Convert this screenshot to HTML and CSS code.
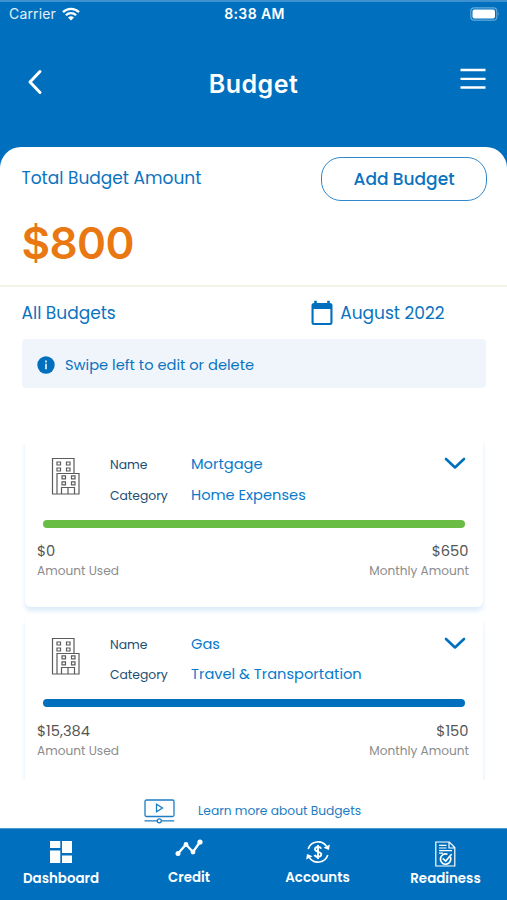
FILE: index.html
```html
<!DOCTYPE html>
<html lang="en">
<head>
<meta charset="utf-8">
<meta name="viewport" content="width=device-width, initial-scale=1">
<title>Budget</title>
<link rel="stylesheet" href="styles.css">
</head>
<body>
<svg class="defs" width="0" height="0">
  <symbol id="building" viewBox="0 0 30 38">
    <g fill="none" stroke="#5c5c5c" stroke-width="1.200">
      <path d="M6 37H1.500V1.500H23V16M6 16.500h22V37H6zM10.500 37v-6.500h13V37M17 30.500V37"/>
      <path d="M6 5h3.500v3H6zM15.500 5H19v3h-3.500zM6 11h3.500v3H6zM15.500 11H19v3h-3.500zM11 18.800h3.500v3H11zM20.500 18.800H24v3h-3.500zM11 24.800h3.500v3H11zM20.500 24.800H24v3h-3.500z"/>
    </g>
  </symbol>
  <symbol id="chevron" viewBox="0 0 22 13">
    <path d="M2 2l9 8.500L20 2" fill="none" stroke="#0070be" stroke-width="2.600" stroke-linecap="round" stroke-linejoin="round"/>
  </symbol>
</svg>
<div class="app">
  <header class="top">
    <div class="status">
      <div class="carrier"><span>Carrier</span>
        <svg width="18" height="14" viewBox="0 0 18 14"><g fill="none" stroke="#fff" stroke-width="2.300"><path d="M1 5.200a11.500 11.500 0 0 1 16 0"/><path d="M3.900 8.300a7.300 7.300 0 0 1 10.200 0"/></g><path d="M9 13.500L6 10.600a4.300 4.300 0 0 1 6 0z" fill="#fff"/></svg>
      </div>
      <span class="clock">8:38 AM</span>
      <svg class="battery" width="30" height="14" viewBox="0 0 30 14"><rect x=".8" y=".8" width="26" height="12.400" rx="3.500" fill="none" stroke="#65a9da" stroke-width="1.200"/><rect x="2.500" y="2.400" width="22.500" height="9.200" rx="2" fill="#fff"/><path d="M28.300 4.800q1.500 2.200 0 4.400z" fill="#65a9da"/></svg>
    </div>
    <div class="titlebar">
      <svg class="back" width="16" height="26" viewBox="0 0 16 26"><path d="M13 2.500L3 13l10 10.500" fill="none" stroke="#fff" stroke-width="3" stroke-linecap="round" stroke-linejoin="round"/></svg>
      <h1>Budget</h1>
      <svg class="menu" width="26" height="22" viewBox="0 0 26 22"><path d="M.5 2h25M.5 10.800h25M.5 19.500h25" stroke="#fff" stroke-width="2.300"/></svg>
    </div>
  </header>
  <main class="sheet">
    <section class="total">
      <div class="total-row"><span class="total-label">Total Budget Amount</span><button class="add">Add Budget</button></div>
      <div class="total-value">$800</div>
    </section>
    <div class="filter">
      <span class="all">All Budgets</span>
      <div class="month">
        <svg width="22" height="26" viewBox="0 0 22 26"><path d="M3.200.7h2.600V3h10.400V.7h2.600V3H19a2.500 2.500 0 0 1 2.500 2.500v17A2.500 2.500 0 0 1 19 25H3a2.500 2.500 0 0 1-2.500-2.500v-17A2.500 2.500 0 0 1 3 3h.2zM2.600 9v13.200c0 .5.200.7.700.7h15.400c.5 0 .7-.2.700-.7V9z" fill="#0070be"/></svg>
        <span>August 2022</span>
      </div>
    </div>
    <div class="hint">
      <svg width="18" height="18" viewBox="0 0 18 18"><circle cx="9" cy="9" r="8.700" fill="#0070be"/><path d="M9 7.800v5.400M9 4.600v1.800" stroke="#fff" stroke-width="1.500"/></svg>
      <span>Swipe left to edit or delete</span>
    </div>
    <section class="list">
      <article class="card">
        <div class="info">
          <svg width="30" height="38"><use href="#building"/></svg>
          <dl><dt>Name</dt><dd>Mortgage</dd><dt>Category</dt><dd>Home Expenses</dd></dl>
          <svg width="22" height="13"><use href="#chevron"/></svg>
        </div>
        <div class="bar green"></div>
        <div class="amounts"><div><b>$0</b><small>Amount Used</small></div><div class="right"><b>$650</b><small>Monthly Amount</small></div></div>
      </article>
      <article class="card">
        <div class="info">
          <svg width="30" height="38"><use href="#building"/></svg>
          <dl><dt>Name</dt><dd>Gas</dd><dt>Category</dt><dd>Travel &amp; Transportation</dd></dl>
          <svg width="22" height="13"><use href="#chevron"/></svg>
        </div>
        <div class="bar blue"></div>
        <div class="amounts"><div><b>$15,384</b><small>Amount Used</small></div><div class="right"><b>$150</b><small>Monthly Amount</small></div></div>
      </article>
    </section>
    <div class="learn">
      <svg width="31" height="25" viewBox="0 0 31 25"><g fill="none" stroke="#1c7dc3" stroke-width="1.300"><rect x="1" y="1" width="29" height="16.500" rx="1.500"/><path d="M12.500 5.200v7.600l6-3.800zM.5 21.800h12.800M17.300 21.800h13"/><circle cx="15.300" cy="21.800" r="2"/></g></svg>
      <span>Learn more about Budgets</span>
    </div>
  </main>
  <nav class="tabs">
    <a class="tab dash"><svg width="24" height="24" viewBox="0 0 24 24"><path d="M1 1h10.300v7H1zM13 1h10v12H13zM1 10.500h10.300V23H1zM13 15.500h10V23H13z" fill="#fff"/></svg><span>Dashboard</span></a>
    <a class="tab credit"><svg width="28" height="20" viewBox="0 0 28 20"><path d="M3 14.500l8-9 7 7.500 7-10" fill="none" stroke="#fff" stroke-width="2.300"/><g fill="#fff"><circle cx="3" cy="14.500" r="2.500"/><circle cx="11" cy="5.500" r="2.400"/><circle cx="18" cy="13" r="2.400"/><circle cx="25" cy="3" r="2.600"/></g></svg><span>Credit</span></a>
    <a class="tab accounts"><svg width="24" height="24" viewBox="0 0 24 24"><g fill="none" stroke="#fff" stroke-width="1.600"><path d="M2.200 9A10.300 10.300 0 0 1 20.600 6.500M21.800 15A10.300 10.300 0 0 1 3.400 17.500"/><path d="M15.200 8.700c-.6-1.300-1.700-1.700-3.200-1.700-1.900 0-3 .9-3 2.300 0 3.200 6.300 1.800 6.300 5 0 1.500-1.300 2.500-3.300 2.500-1.700 0-2.900-.7-3.400-2M12 5v14" stroke-width="1.900"/></g><path d="M23.800 4.500l-.8 5.500-5.500-2.200zM.2 19.500l.8-5.500 5.500 2.200z" fill="#fff"/></svg><span>Accounts</span></a>
    <a class="tab ready"><svg width="21" height="26" viewBox="0 0 21 26"><g fill="none" stroke="#fff" stroke-width="1.200"><path d="M.8 1h13.500l5.500 5.500V25H.8zM14 1v6h5.800"/><path d="M4 4.300h7.500M4 7h7.500M4 9.700h13M4 12.200h4"/><path d="M15.300 15.800A5.200 5.200 0 1 1 12.500 13.200" stroke-width="1.700"/><path d="M7.700 17.300l3 2.700 6-7" stroke-width="1.600"/></g></svg><span>Readiness</span></a>
  </nav>
</div>
</body>
</html>
```
FILE: styles.css
```css
* { box-sizing: border-box; }
body { margin: 0; background: #fff; font-family: Poppins, Inter, "Open Sans", sans-serif; }
svg { display: block; flex: none; }
.defs { position: absolute; }
.app { width: 507px; height: 900px; display: flex; flex-direction: column; overflow: hidden; background: #0070be; color: #0a73bf; }
.app span, dt, dd, b, small, h1, .total-value { white-space: nowrap; }
.top { height: 147px; color: #fff; border-top: 2px solid #3c91ce; }
.status { height: 24px; padding: 0 7px 0 9px; display: grid; grid-template-columns: 1fr auto 1fr; align-items: center; font: 14px/24px Inter, sans-serif; }
.carrier { display: flex; align-items: center; gap: 6px; letter-spacing: .15px; color: #e3f0fa; }
.clock { font-weight: 600; letter-spacing: .4px; }
.battery { justify-self: end; }
.titlebar { display: grid; grid-template-columns: 1fr auto 1fr; align-items: center; height: 60px; margin-top: 26px; padding: 0 21px; }
.back { margin-left: 6px; }
h1 { margin: 3px 0 0; font: 600 25px/32px Inter, sans-serif; letter-spacing: .5px; }
.menu { justify-self: end; margin-top: -6px; }
.sheet { height: 681px; background: #fff; border-radius: 21px 21px 0 0; display: flex; flex-direction: column; }
.total { height: 140px; padding: 10px 20px 0 21.500px; border-bottom: 2px solid #f3f3e8; }
.total-row { display: flex; justify-content: space-between; height: 44px; }
.total-label { font-size: 17px; line-height: 43px; }
.add { width: 166px; height: 44px; border: 1.500px solid #3088ca; border-radius: 20px; background: #fff; color: #0a73bf; font: 500 17px/42px Poppins, Inter, sans-serif; padding: 0; }
.total-value { color: #e97812; font: 600 44px/54px Inter, sans-serif; letter-spacing: -.6px; margin-top: 15px; }
.filter { height: 52px; padding: 0 62.500px 0 21.500px; display: flex; justify-content: space-between; align-items: center; font-size: 17px; }
.month { display: flex; align-items: center; gap: 7px; }
.month svg { margin-top: -1px; }
.hint { height: 49px; margin: 0 21px 0 22px; padding: 2px 0 0 15px; border-radius: 4px; background: #f0f5fc; display: flex; align-items: center; gap: 10px; font-size: 14.650px; }
.hint span { padding-top: 1px; }
.list { height: 337px; margin-top: 55px; padding: 0 24px 0 25px; overflow: hidden; }
.card { height: 170px; margin: -6px 0 9.500px; border-radius: 6px; background: #fff; box-shadow: 0 4px 5px #dcebfa; }
.card + .card { margin-top: 0; height: 190px; }
.info { display: flex; height: 83px; padding: 20px 17px 0 26px; }
dl { display: grid; grid-template-columns: 81px 1fr; grid-auto-rows: 30.500px; margin: -9px 0 0 29px; flex: 1; line-height: 31px; }
dt { color: #214d70; font-size: 12.350px; padding-top: 1px; }
dd { margin: 0; padding-top: 1px; color: #087acb; font-size: 14.650px; }
.bar { height: 8px; border-radius: 4px; margin: 0 18px; }
.green { background: #69bd45; }
.blue { background: #0070be; }
.card + .card .bar { margin-top: -.5px; }
.amounts { display: flex; justify-content: space-between; padding: 12px 14px 0 12px; color: #555; }
.card + .card .amounts { padding-top: 12.500px; }
.amounts b, .amounts small { display: block; }
.amounts b { font-weight: 400; font-size: 14.650px; line-height: 22px; }
.amounts small { font-size: 12.150px; line-height: 17px; color: #8c8c8c; }
.right { text-align: right; }
.right b { margin-right: .5px; }
.learn { height: 48px; padding: 14px 0 0 144px; display: flex; align-items: center; gap: 23px; font-size: 12.250px; color: #1c7dc3; }
.tabs { height: 72px; display: flex; color: #fff; border-top: 1px solid #4a99d2; }
.tab { display: flex; flex-direction: column; align-items: center; font-weight: 600; font-size: 13.400px; line-height: 18px; }
.dash { width: 122px; padding-top: 11px; gap: 6px; }
.credit { width: 134px; padding-top: 10px; gap: 10px; }
.accounts { width: 123px; padding-top: 11px; gap: 5px; }
.ready { width: 128px; padding: 12px 0 0 5px; gap: 3px; }
```
